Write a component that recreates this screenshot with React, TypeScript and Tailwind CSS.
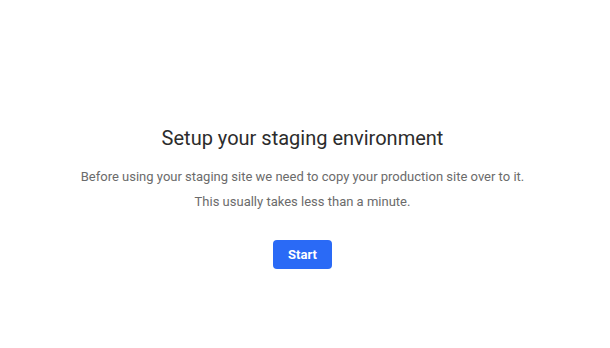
import React from 'react'

const App = () => {
    return (
        <div className="h-[348px] w-full bg-white flex flex-col items-center pt-[124px] pr-[5px] font-['Roboto',sans-serif]">
            <h1 className="text-[20px] leading-[28px] text-[#2c2c2c] font-normal">Setup your staging environment</h1>
            <p className="mt-[12px] text-[13px] leading-[25px] text-[#6b6b6b] text-center">
                Before using your staging site we need to copy your production site over to it.
                <br />
                This usually takes less than a minute.
            </p>
            <button className="mt-[26px] h-[29px] w-[59px] rounded-[4px] bg-[#2a6af6] text-white text-[13px] font-bold">
                Start
            </button>
        </div>
    )
}

export default App
